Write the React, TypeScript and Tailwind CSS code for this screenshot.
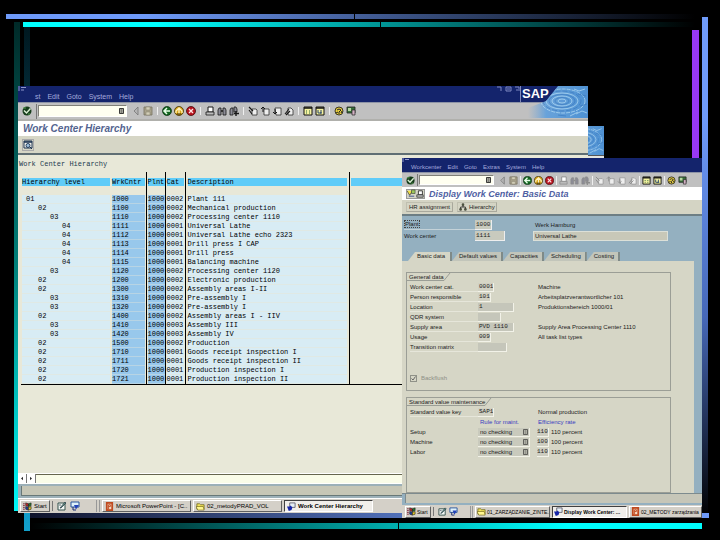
import type { ReactNode } from "react";
import clsx from "clsx";

type GlyphName =
  | "check" | "left" | "save" | "back" | "exit" | "cancel" | "print" | "find" | "findNext"
  | "first" | "prev" | "next" | "last" | "session" | "shortcut" | "help" | "layout"
  | "detail" | "change" | "tree" | "windows" | "desktop" | "refresh" | "ppt" | "folder" | "sap";

const GLYPHS: Record<GlyphName, ReactNode> = {
  check: (
    <>
      <circle cx="5" cy="5" r="4.5" fill="#173d1c" />
      <path d="M2 4.5L4.5 7L8.5 2.5" fill="none" stroke="#d9efd2" strokeWidth="1.5" />
      <path d="M1 2h3M6 8h2" stroke="#57a04f" />
    </>
  ),
  left: <path d="M7 1L3 5l4 4z" fill="#b4b4b4" stroke="#777" strokeWidth=".8" />,
  save: (
    <>
      <path d="M1 1h8v8H1z" fill="#a8a28c" stroke="#77715f" strokeWidth=".8" />
      <path d="M3 1h4v3H3zM3 6h4v3H3z" fill="#d2ceb8" stroke="#827c68" strokeWidth=".5" />
    </>
  ),
  back: (
    <>
      <circle cx="5" cy="5" r="4.5" fill="#12651f" stroke="#0a2b10" strokeWidth=".7" />
      <path d="M5 2L2 5l3 3M2 5h6" fill="none" stroke="#e8ffe8" strokeWidth="1.5" />
    </>
  ),
  exit: (
    <>
      <circle cx="5" cy="5" r="4.5" fill="#d9a514" stroke="#3c2c05" strokeWidth=".8" />
      <path d="M2 7V5l3-3l3 3v2M5 3v5" fill="none" stroke="#fff3bd" strokeWidth="1.3" />
      <path d="M3 8h4" stroke="#2a2108" />
    </>
  ),
  cancel: (
    <>
      <circle cx="5" cy="5" r="4.5" fill="#b8141f" stroke="#44070b" strokeWidth=".8" />
      <path d="M3 3l4 4M7 3L3 7" stroke="#ffe5e5" strokeWidth="1.3" />
    </>
  ),
  print: (
    <>
      <path d="M3 1h5v5H3z" fill="#fff" stroke="currentColor" />
      <path d="M1 6h8v3H1z" fill="#bbb" stroke="currentColor" strokeWidth=".8" />
    </>
  ),
  find: (
    <>
      <path d="M1 4l1-2h2v7H1zM6 2h2l1 2v5H6z" fill="#8c8c96" stroke="currentColor" strokeWidth=".8" />
      <path d="M4 5h2" stroke="currentColor" strokeWidth="1.5" />
    </>
  ),
  findNext: (
    <>
      <path d="M1 4l1-2h2v7H1zM5 1h2l1 2v3H5z" fill="#8c8c96" stroke="currentColor" strokeWidth=".8" />
      <path d="M7 5v5M5 7.5h5" stroke="currentColor" strokeWidth="1.4" />
    </>
  ),
  first: (
    <>
      <path d="M4 3h4l1 1v5H4z" fill="#eee" stroke="currentColor" strokeWidth=".7" />
      <path d="M1 1l4 4M1 4l3 4" stroke="currentColor" strokeWidth="1.1" />
    </>
  ),
  prev: (
    <>
      <path d="M4 3h5v6H4z" fill="#eee" stroke="currentColor" strokeWidth=".7" />
      <path d="M1 3l2-2l2 2M3 1v5" fill="none" stroke="currentColor" />
    </>
  ),
  next: (
    <>
      <path d="M3 2h6v7H4z" fill="#eee" stroke="currentColor" strokeWidth=".7" />
      <path d="M1 6l2 2l2-2M3 3v5" fill="none" stroke="currentColor" />
    </>
  ),
  last: (
    <>
      <path d="M4 2h3l2 2v5H4z" fill="#eee" stroke="currentColor" strokeWidth=".7" />
      <path d="M1 8l4-5M2 9l4-4" stroke="currentColor" strokeWidth="1.1" />
    </>
  ),
  session: (
    <>
      <path d="M1 1h8v8H1z" fill="#f5f2a0" stroke="#111" />
      <path d="M1 2h8" stroke="#111" strokeWidth="1.5" />
      <path d="M3 5h1M6 5h1M3 7h1M6 7h1" stroke="#28633a" />
    </>
  ),
  shortcut: (
    <>
      <path d="M1 1h8v8H1z" fill="#f5f2a0" stroke="#111" />
      <path d="M1 2h8" stroke="#111" strokeWidth="1.5" />
      <path d="M3 4v3h3V4M5 7h2" fill="none" stroke="#28446b" />
    </>
  ),
  help: (
    <>
      <circle cx="5" cy="5" r="4" fill="#e8cf40" stroke="#111" strokeWidth=".8" />
      <path d="M3 4l2-1l2 1l-2 2v2M2 7l2-1M7 7l1-2" fill="none" stroke="#222" />
    </>
  ),
  layout: (
    <>
      <path d="M1 1h8v6H1z" fill="#39703a" stroke="#222" strokeWidth=".8" />
      <path d="M2 2h3v3H2z" fill="#b7d6a1" />
      <path d="M6 4h3v5H6z" fill="#d1b0c2" stroke="#222" strokeWidth=".7" />
    </>
  ),
  detail: (
    <>
      <path d="M1 1h8v7H1z" fill="#f4f4ee" stroke="#19304f" />
      <path d="M1 2h8" stroke="#19304f" strokeWidth="1.5" />
      <circle cx="5" cy="5.5" r="2" fill="#9fc1dd" stroke="#19304f" strokeWidth=".9" />
      <path d="M7 7l2 2" stroke="#19304f" />
    </>
  ),
  change: (
    <>
      <path d="M0 2l3 5l3-5" fill="#f6e34a" stroke="#222" strokeWidth=".7" />
      <path d="M5 1h4v4H5z" fill="#9cc85b" stroke="#333" strokeWidth=".6" />
      <path d="M2 8h6" stroke="#394b8d" />
    </>
  ),
  tree: (
    <>
      <path d="M5 3v2M2 7V5h6v2" fill="none" stroke="#222" />
      <path d="M4 1h2v2H4zM1 7h2v2H1zM7 7h2v2H7z" fill="#6f7f4b" stroke="#222" strokeWidth=".8" />
    </>
  ),
  windows: (
    <>
      <path d="M3 1l3 1v3L3 4z" fill="#c9282b" stroke="#111" strokeWidth=".6" />
      <path d="M6 2l3-1v3L6 5z" fill="#247a30" stroke="#111" strokeWidth=".6" />
      <path d="M3 5l3 1v3L3 8z" fill="#2440a5" stroke="#111" strokeWidth=".6" />
      <path d="M6 6l3-1v3L6 9z" fill="#e4c828" stroke="#111" strokeWidth=".6" />
      <path d="M0 2h2M0 4h2M0 6h2M0 8h2" stroke="#7d2138" />
    </>
  ),
  desktop: (
    <>
      <path d="M1 2h7v7H1z" fill="#f1f6f3" stroke="#33504c" />
      <path d="M3 7l5-6l1 1l-5 5zM2 4h2" fill="#6aa089" stroke="#234" strokeWidth=".7" />
    </>
  ),
  refresh: (
    <>
      <path d="M1 1h8v5H1z" fill="#dff1fa" stroke="#28549a" />
      <path d="M4 4h5L6 8.5z" fill="#2343b8" />
      <path d="M3 6v3h3" fill="none" stroke="#1b2c70" />
    </>
  ),
  ppt: (
    <>
      <path d="M1 0h8v10H1z" fill="#bf4a1f" />
      <path d="M3 2h4v6H3z" fill="#f6d9c2" />
      <path d="M4 8V3h2v2H4" fill="none" stroke="#bf4a1f" />
    </>
  ),
  folder: (
    <>
      <path d="M1 2h3l1 1h4v5H1z" fill="#f2e45a" stroke="#6a6114" strokeWidth=".8" />
      <path d="M0 5h8l1 4H2z" fill="#fff690" stroke="#6a6114" strokeWidth=".7" />
    </>
  ),
  sap: (
    <>
      <path d="M3 1h6v5H3z" fill="#e6eef5" stroke="#445" strokeWidth=".8" />
      <path d="M0 5h3l1-1l2 2l-1 3l-3 1z" fill="#1625a8" />
    </>
  ),
};

function Glyph({ name, className = "size-[10px]" }: { name: GlyphName; className?: string }) {
  return (
    <svg viewBox="0 0 10 10" className={clsx("block shrink-0", className)} aria-hidden="true">
      {GLYPHS[name]}
    </svg>
  );
}

const TOOL_GROUPS: GlyphName[][] = [
  ["left", "save"],
  ["back", "exit", "cancel"],
  ["print", "find", "findNext"],
  ["first", "prev", "next", "last"],
  ["session", "shortcut"],
  ["help", "layout"],
];

function Toolbar({ compact = false }: { compact?: boolean }) {
  const size = compact ? "size-[9px]" : "size-[10px]";
  return (
    <div
      className={clsx(
        "flex shrink-0 items-center border-t border-[#8e94a6] bg-[#c0c0c0] pl-1",
        compact ? "h-[15px]" : "h-[19px] border-b-2 border-b-[#b0b0ac]"
      )}
    >
      <button type="button" aria-label="Enter"><Glyph name="check" className={size} /></button>
      <span className={clsx("w-px bg-[#777]", compact ? "ml-[2px] h-3" : "ml-1 h-[15px]")} />
      <div className={clsx("relative ml-px flex items-center", compact ? "w-[75px]" : "w-[89px]")}>
        <input
          aria-label="Command"
          className={clsx(
            "w-full min-w-0 border border-t-[#808078] border-l-[#808078] border-r-white border-b-white bg-[#fffff0]",
            compact ? "h-[10px]" : "h-3"
          )}
        />
        <svg viewBox="0 0 5 6" className="absolute right-[3px] h-[6px] w-[5px]" aria-hidden="true">
          <path d="M.5.5h4v5h-4zM1.5 2h2M1.5 4h2" fill="#c8c8bc" stroke="#111" strokeWidth=".8" />
        </svg>
      </div>
      <div className="ml-1 flex items-center gap-[2px]">
        {TOOL_GROUPS.map((group, i) => (
          <div key={i} className="flex items-center gap-[2px]">
            {i > 0 && <span className={clsx("w-px bg-[#eee]", compact ? "h-[9px]" : "mx-[2px] h-2")} />}
            {group.map((name) => (
              <button
                key={name}
                type="button"
                aria-label={name}
                className={compact ? "text-[#8c8c8c]" : "text-[#181818]"}
              >
                <Glyph name={name} className={size} />
              </button>
            ))}
          </div>
        ))}
      </div>
    </div>
  );
}

function Water({ className }: { className: string }) {
  return (
    <svg viewBox="0 0 60 32" preserveAspectRatio="none" className={className} aria-hidden="true">
      <defs>
        <linearGradient id="water" x1="0" x2="1" y1="0" y2="0">
          <stop offset="0" stopColor="#7fa9d4" stopOpacity="0" />
          <stop offset=".3" stopColor="#6aa3da" />
          <stop offset="1" stopColor="#4f92d3" />
        </linearGradient>
        <clipPath id="shore">
          <path d="M30 0H60V32H0V22L18 15z" />
        </clipPath>
      </defs>
      <g clipPath="url(#shore)">
        <path d="M0 0H60V32H0z" fill="url(#water)" />
        <g fill="none" stroke="#b4dcf5" strokeWidth=".9" opacity=".8">
          <ellipse cx="34" cy="15" rx="4" ry="2" />
          <ellipse cx="34" cy="15" rx="10" ry="5" />
          <ellipse cx="34" cy="15" rx="16" ry="8" />
          <ellipse cx="35" cy="15" rx="22" ry="12" strokeDasharray="4 1" />
          <path d="M46 3l5 2l6-2M48 28l6-3l5 2M42 30l8-4" />
        </g>
        <g fill="none" stroke="#2f6fb6" strokeWidth=".7" opacity=".7">
          <ellipse cx="34" cy="15" rx="7" ry="3.5" />
          <ellipse cx="34" cy="15" rx="13" ry="6.5" />
          <ellipse cx="34" cy="15" rx="19" ry="10" strokeDasharray="5 2" />
          <path d="M50 8l8 2M52 20l7-2M30 29l8 1" />
        </g>
      </g>
    </svg>
  );
}

type Row = [level: number, wrkCntr: string, cat: string, description: string];

const ROWS: Row[] = [
  [1, "1000", "0002", "Plant 111"],
  [2, "1100", "0002", "Mechanical production"],
  [3, "1110", "0002", "Processing center 1110"],
  [4, "1111", "0001", "Universal Lathe"],
  [4, "1112", "0001", "Universal Lathe echo 2323"],
  [4, "1113", "0001", "Drill press I CAP"],
  [4, "1114", "0001", "Drill press"],
  [4, "1115", "0001", "Balancing machine"],
  [3, "1120", "0002", "Processing center 1120"],
  [2, "1200", "0002", "Electronic production"],
  [2, "1300", "0002", "Assembly areas I-II"],
  [3, "1310", "0002", "Pre-assembly I"],
  [3, "1320", "0002", "Pre-assembly I"],
  [2, "1400", "0002", "Assembly areas I - IIV"],
  [3, "1410", "0003", "Assembly III"],
  [3, "1420", "0003", "Assembly IV"],
  [2, "1500", "0002", "Production"],
  [2, "1710", "0001", "Goods receipt inspection I"],
  [2, "1711", "0001", "Goods receipt inspection II"],
  [2, "1720", "0001", "Production inspection I"],
  [2, "1721", "0001", "Production inspection II"],
];

const INDENT = ["", "pl-1", "pl-4", "pl-7", "pl-10"];

function HierarchyTable() {
  const line = "border-r border-black p-0";
  const head = "mb-[9px] mt-[6px] h-2 bg-[#60ccf8] leading-[8px]";
  const pale = "h-[9px] border-b border-[#e0e9e4] bg-[#d8ecf4] leading-[8px]";
  const blue = "h-[9px] border-b border-[#b8d4e4] bg-[#98c8ec] leading-[8px]";
  return (
    <table className="mt-[3px] w-full table-fixed border-collapse border-b border-black text-left text-black">
      <colgroup>
        <col className="w-[90px]" />
        <col className="w-[35px]" />
        <col className="w-[19px]" />
        <col className="w-5" />
        <col className="w-[164px]" />
        <col />
      </colgroup>
      <thead>
        <tr className="whitespace-nowrap">
          <th className="p-0 font-normal"><div className={clsx(head, "mx-px")}>Hierarchy level</div></th>
          <th className={clsx(line, "font-normal")}><div className={clsx(head, "mx-px")}>WrkCntr</div></th>
          <th className={clsx(line, "font-normal")}><div className={clsx(head, "ml-px")}>Plnt</div></th>
          <th className={clsx(line, "font-normal")}><div className={clsx(head, "mx-px")}>Cat</div></th>
          <th className={clsx(line, "font-normal")}><div className={clsx(head, "mx-[2px]")}>Description</div></th>
          <th className="p-0"><div className={clsx(head, "ml-px")} /></th>
        </tr>
      </thead>
      <tbody>
        {ROWS.map(([level, wrkCntr, cat, description]) => (
          <tr key={wrkCntr} className="whitespace-nowrap">
            <td className="p-0"><div className={clsx(pale, "mx-px", INDENT[level])}>0{level}</div></td>
            <td className={line}><div className={clsx(blue, "mx-px")}>{wrkCntr}</div></td>
            <td className={line}><div className={clsx(blue, "ml-px")}>1000</div></td>
            <td className={line}><div className={clsx(pale, "mx-px")}>{cat}</div></td>
            <td className={line}><div className={clsx(pale, "mx-[2px]")}>{description}</div></td>
            <td className="p-0" />
          </tr>
        ))}
      </tbody>
    </table>
  );
}

function TaskButton({ icon, active, small, className, children }: {
  icon: GlyphName;
  active?: boolean;
  small?: boolean;
  className?: string;
  children: ReactNode;
}) {
  return (
    <button
      type="button"
      className={clsx(
        "flex h-3 items-center overflow-hidden border leading-[8px] whitespace-nowrap text-black",
        small ? "gap-px pl-px text-[5px]" : "gap-[2px] pl-[2px] text-[6px]",
        active
          ? "border-t-[#404040] border-l-[#404040] border-r-white border-b-white bg-[#f0eeea] font-bold"
          : "border-t-white border-l-white border-r-[#606060] border-b-[#606060] bg-[#d4d0c8]",
        className
      )}
    >
      <Glyph name={icon} className="size-[9px]" />
      {children}
    </button>
  );
}

function Menu({ items, className }: { items: string[]; className: string }) {
  return (
    <nav className={clsx("flex items-center text-[#a3a9dc]", className)}>
      {items.map((item) => (
        <button key={item} type="button">{item}</button>
      ))}
    </nav>
  );
}

function HierarchyWindow() {
  return (
    <section className="absolute top-[86px] right-[132px] bottom-[27px] left-[18px] flex flex-col overflow-hidden bg-[#e8e8d8]">
      <div className="flex h-4 shrink-0 items-start bg-[#14246c]">
        <svg viewBox="0 0 8 7" className="h-[7px] w-2" aria-hidden="true">
          <path d="M1 0v5M3 1.5h5M3 4h3" fill="none" stroke="#8e96cc" />
        </svg>
        <Menu items={["st", "Edit", "Goto", "System", "Help"]} className="h-4 gap-[7px] pt-[6px] pl-[9px] text-[7px] leading-[8px]" />
      </div>
      <div className="absolute top-0 right-0 flex h-8 w-[92px] items-start">
        <svg viewBox="0 0 24 7" className="h-[7px] w-6 shrink-0" aria-hidden="true">
          <path d="M1 1h4v4M10 1h5v4h-5zM11 3h3M19 1h4v4M20 4h2" fill="none" stroke="#7f88c0" />
        </svg>
        <span className="h-4 w-px shrink-0 bg-[#8088b8]" />
        <Water className="absolute right-0 h-8 w-[60px]" />
        <span className="relative pl-px text-[13px] leading-[16px] font-bold text-white">SAP</span>
      </div>
      <Toolbar />
      <h1 className="h-[15px] shrink-0 bg-white pl-[5px] text-[10px] leading-[15px] font-bold text-[#53648f] italic">
        Work Center Hierarchy
      </h1>
      <div className="flex h-[19px] shrink-0 items-center border-b-2 border-[#5f6e74] bg-[#d6d6c6] pl-1">
        <button type="button" aria-label="Details" className="flex size-3 items-center justify-center border border-[#aaa]">
          <Glyph name="detail" />
        </button>
      </div>
      <div className="flex-1 pt-[5px] pl-[3px] font-['Liberation_Mono',monospace] text-[7px]">
        <h2 className="-ml-[2px] leading-[9px] text-[#1e3c50]">Work Center Hierarchy</h2>
        <HierarchyTable />
      </div>
      <div className="flex h-[11px] shrink-0 items-stretch gap-px border-t border-b border-white bg-[#777]">
        <button type="button" aria-label="Scroll left" className="flex w-2 items-center justify-center bg-white">
          <svg viewBox="0 0 4 6" className="h-[5px] w-1"><path d="M3 1L1 3l2 2z" /></svg>
        </button>
        <button type="button" aria-label="Scroll right" className="flex w-2 items-center justify-center bg-white">
          <svg viewBox="0 0 4 6" className="h-[5px] w-1"><path d="M1 1l2 2l-2 2z" /></svg>
        </button>
        <span className="flex-1 border-t border-[#66664e] bg-[#fafce8]" />
      </div>
      <div className="h-[14px] shrink-0 border-y-2 border-[#9cb0b8] bg-[#9cb0b8] pl-[3px]">
        <div className="h-[10px] border-b border-l border-[#687878] bg-[#c6c6b6]" />
      </div>
      <div className="flex h-[15px] shrink-0 items-center gap-[2px] border-t border-white bg-[#d4d0c8] pl-[2px]">
        <TaskButton icon="windows" className="w-[30px]">Start</TaskButton>
        <div className="mr-[14px] flex gap-[3px] border-l border-[#777] pl-1">
          <Glyph name="desktop" />
          <Glyph name="refresh" />
        </div>
        <span className="h-3 w-1 border-x border-[#999]" />
        <TaskButton icon="ppt" className="w-[89px]">Microsoft PowerPoint - [C..</TaskButton>
        <TaskButton icon="folder" className="w-[89px]">02_metodyPRAD_VOL</TaskButton>
        <TaskButton icon="sap" active className="w-[89px]">Work Center Hierarchy</TaskButton>
      </div>
    </section>
  );
}

const MONO = "font-['Liberation_Mono',monospace]";

type Field = {
  id: string;
  label: string;
  value: string;
  width: string;
  filled?: boolean;
  note?: string;
};

const GENERAL: Field[] = [
  { id: "cat", label: "Work center cat.", value: "0001", width: "w-4", note: "Machine" },
  { id: "person", label: "Person responsible", value: "101", width: "w-[13px]", note: "Arbeitsplatzverantwortlicher 101" },
  { id: "location", label: "Location", value: "1", width: "w-9", filled: true, note: "Produktionsbereich 1000/01" },
  { id: "qdr", label: "QDR system", value: "", width: "w-[23px]", filled: true },
  { id: "supply", label: "Supply area", value: "PVD 1110", width: "w-9", filled: true, note: "Supply Area Processing Center 1110" },
  { id: "usage", label: "Usage", value: "009", width: "w-[13px]", note: "All task list types" },
  { id: "matrix", label: "Transition matrix", value: "", width: "w-[29px]", filled: true },
];

function FieldRow({ id, label, value, width, filled, note }: Field) {
  return (
    <div className="flex h-[10px] items-center">
      <label htmlFor={id} className="h-[10px] w-[68px] border-b border-[#e6e6da] leading-[10px]">{label}</label>
      <div className="flex w-[60px]">
        <input
          id={id}
          readOnly
          defaultValue={value}
          className={clsx(
            "h-[9px] min-w-0 border-r border-b border-[#f2f2e8] pl-px text-[6px]",
            MONO,
            width,
            filled ? "bg-[#c5c6ba]" : "bg-[#d0d0c2]"
          )}
        />
      </div>
      <span>{note}</span>
    </div>
  );
}

const CHECKS = [
  { label: "Setup", rate: "110" },
  { label: "Machine", rate: "100" },
  { label: "Labor", rate: "110" },
];

function Group({ title, className, children }: { title: string; className?: string; children: ReactNode }) {
  return (
    <section className={clsx("mr-[23px] border border-[#9b9e96]", className)}>
      <div className="flex h-2">
        <h3 className="border-b border-[#9b9e96] pl-[2px] leading-[8px]">{title}</h3>
        <svg viewBox="0 0 7 8" className="h-2 w-[7px]" aria-hidden="true">
          <path d="M0 7.5L6 0" stroke="#9b9e96" />
        </svg>
      </div>
      <div className="pt-px pl-[3px]">{children}</div>
    </section>
  );
}

function DataWindow() {
  return (
    <section className="absolute top-[158px] right-[18px] bottom-[22px] left-[402px] flex flex-col overflow-hidden bg-[#94b0c0] text-[6px] leading-[8px] text-[#1c1c1c]">
      <div className="flex h-[14px] shrink-0 items-start bg-[#14246c]">
        <svg viewBox="0 0 8 7" className="h-[7px] w-2" aria-hidden="true">
          <path d="M1 0v4M3 1.5h4" fill="none" stroke="#8e96cc" />
        </svg>
        <Menu items={["Workcenter", "Edit", "Goto", "Extras", "System", "Help"]} className="h-[14px] gap-[6px] pt-1 pl-px" />
      </div>
      <Toolbar compact />
      <div className="flex h-[13px] shrink-0 items-center gap-1 bg-white pl-1">
        <button type="button" aria-label="Display or change" className="flex h-[10px] w-[19px] items-center border border-[#999] bg-[#d6d6c6]">
          <Glyph name="change" className="size-[9px]" />
          <Glyph name="print" className="size-2" />
        </button>
        <h1 className="text-[9px] leading-[12px] font-bold text-[#4f5fa3] italic">Display Work Center: Basic Data</h1>
      </div>
      <div className="flex h-4 shrink-0 items-center gap-1 border-b-2 border-[#6d7e84] bg-[#d4d4c4] pl-1">
        <button type="button" className="h-[10px] border border-[#c0c0b0] border-r-[#a8a89c] border-b-[#a8a89c] px-[2px]">HR assignment</button>
        <button type="button" className="flex h-[10px] items-center gap-[2px] border border-[#c0c0b0] border-r-[#a8a89c] border-b-[#a8a89c] px-px">
          <Glyph name="tree" className="size-2" />
          Hierarchy
        </button>
      </div>

      <div className="flex h-9 shrink-0 flex-col gap-px pt-1 pl-[2px]">
        <div className="flex h-[10px] items-center">
          <label htmlFor="plant" className="w-[71px] border-b border-[#c4d2d8] leading-[9px]">
            <span className="border border-dotted border-[#444]">Plant</span>
          </label>
          <div className="w-[60px]">
            <input id="plant" readOnly defaultValue="1000" className={clsx("block h-[10px] w-[17px] border-r border-b border-[#eee] bg-[#c8cabe] pl-px text-[6px]", MONO)} />
          </div>
          <span>Werk Hamburg</span>
        </div>
        <div className="flex h-[10px] items-center">
          <label htmlFor="wc" className="w-[71px]">Work center</label>
          <div className="w-[58px]">
            <input id="wc" readOnly defaultValue="1111" className={clsx("block h-[10px] w-[30px] border-r border-b border-[#eee] bg-[#c8cabe] pl-px text-[6px]", MONO)} />
          </div>
          <input aria-label="Work center name" readOnly defaultValue="Universal Lathe" className="h-[10px] w-[135px] min-w-0 border border-[#dce0d8] bg-[#c8c8b8] pl-px text-[6px]" />
        </div>
      </div>

      <div role="tablist" className="flex h-[9px] shrink-0 pl-[6px]">
        {["Basic data", "Default values", "Capacities", "Scheduling", "Costing"].map((tab, i) => (
          <button
            key={tab}
            type="button"
            role="tab"
            aria-selected={i === 0}
            className={clsx(
              "border-r-2 border-[#7f8a88] leading-[9px] [clip-path:polygon(7px_0,100%_0,100%_100%,0_100%)]",
              i === 0 ? "bg-[#d6d6c6] pr-[5px] pl-[9px]" : "bg-[#c2c5ba] pr-1 pl-[7px]"
            )}
          >
            {tab}
          </button>
        ))}
      </div>

      <div className="mr-2 flex flex-1 flex-col bg-[#d6d6c6] pt-[11px] pl-1">
        <Group title="General data" className="h-[119px]">
          {GENERAL.map((field) => <FieldRow key={field.id} {...field} />)}
          <label className="mt-[22px] flex items-center gap-1 text-[#8d8f86]">
            <span className="relative flex size-[7px]">
              <input type="checkbox" defaultChecked disabled className="size-[7px] appearance-none border border-[#8f9188] bg-[#d6d6c6]" />
              <svg viewBox="0 0 7 7" className="absolute inset-0 size-[7px]" aria-hidden="true">
                <path d="M1.5 3.5L3 5l2.5-3.5" fill="none" stroke="#666" />
              </svg>
            </span>
            Backflush
          </label>
        </Group>
        <Group title="Standard value maintenance" className="mt-[6px] flex-1">
          <FieldRow id="key" label="Standard value key" value="SAP1" width="w-4" note="Normal production" />
          <div className="flex h-[10px] items-center pl-[70px] text-[#3a3cc0]">
            <span className="w-[58px]">Rule for maint.</span>
            <span>Efficiency rate</span>
          </div>
          {CHECKS.map(({ label, rate }) => (
            <div key={label} className="flex h-[10px] items-center">
              <label htmlFor={label} className="w-[68px]">{label}</label>
              <div className="relative flex w-[59px] items-center">
                <select id={label} className="h-[9px] w-[52px] appearance-none border-r border-b border-[#f2f2e8] bg-[#c9cabd] pl-[2px] text-[6px] leading-[8px]">
                  <option>no checking</option>
                </select>
                <svg viewBox="0 0 5 6" className="pointer-events-none absolute right-[9px] h-[6px] w-[5px]" aria-hidden="true">
                  <path d="M.5.5h4v5h-4zM1.5 2h2M1.5 4h2" fill="none" stroke="#333" strokeWidth=".7" />
                </svg>
              </div>
              <input aria-label={`${label} rate`} readOnly defaultValue={rate} className={clsx("h-[9px] w-3 min-w-0 border-r border-b border-[#f2f2e8] bg-[#cdcdc0] text-[6px]", MONO)} />
              <span className="pl-[2px]">{rate} percent</span>
            </div>
          ))}
        </Group>
      </div>

      <div className="h-3 shrink-0 border-t border-[#7d8b8e] pb-[2px] pl-[3px]">
        <div className="h-[9px] border-l border-[#7d8b8e] bg-[#c6c6b8]" />
      </div>
      <div className="flex h-[13px] shrink-0 items-center gap-[2px] bg-[#d4d0c8] pl-[3px]">
        <TaskButton icon="windows" small className="w-[26px]">Start</TaskButton>
        <div className="mr-[10px] flex gap-[2px] border-l border-[#777] pl-1">
          <Glyph name="desktop" className="size-[9px]" />
          <Glyph name="refresh" className="size-[9px]" />
        </div>
        <span className="h-3 w-[3px] border-x border-[#999]" />
        <TaskButton icon="folder" small className="w-[75px]">01_ZARZĄDZANIE_ZINTE...</TaskButton>
        <TaskButton icon="sap" small active className="w-[75px]">Display Work Center: ...</TaskButton>
        <TaskButton icon="ppt" small className="min-w-0 flex-1">02_METODY zarządzania</TaskButton>
      </div>
    </section>
  );
}

function SlideFrame() {
  return (
    <div aria-hidden="true">
      <div className="absolute top-[22px] bottom-[29px] left-[14px] w-[6px] bg-linear-to-b/srgb from-[#002a28] via-[#00807a] to-[#00f8f8]" />
      <div className="absolute top-[27px] bottom-[9px] left-6 w-[6px] bg-linear-to-b/srgb from-[#001820] to-[#12a0cc]" />
      <div className="absolute top-[14px] right-[25px] left-[6px] h-[5px] bg-linear-to-r/srgb from-[#6f9bfa] from-20% to-black" />
      <div className="absolute top-[14px] left-[354px] h-[5px] w-px bg-black" />
      <div className="absolute top-[22px] right-[25px] left-[23px] h-[5px] bg-linear-to-r/srgb from-[#00ffff] from-20% to-black" />
      <div className="absolute top-[22px] left-[380px] h-[5px] w-px bg-black" />
      <div className="absolute top-[30px] right-[21px] bottom-[30px] w-[7px] bg-linear-to-b/srgb from-[#9838f4] from-30% to-black" />
      <div className="absolute top-[17px] right-3 bottom-[22px] w-[6px] bg-linear-to-b/srgb from-[#6f9bfa] from-20% via-[#4668b8] via-60% to-black" />
      <div className="absolute right-[11px] bottom-[22px] left-[30px] h-[5px] bg-linear-to-r/srgb from-[#10142c] to-[#6f9bfa] to-80%" />
      <div className="absolute right-[18px] bottom-[11px] left-[30px] h-[6px] bg-linear-to-r/srgb from-black to-[#00ffff] to-80%" />
      <div className="absolute bottom-[11px] left-[398px] h-[6px] w-px bg-black" />
    </div>
  );
}

export default function App() {
  return (
    <main className="relative h-screen overflow-hidden bg-black font-['Liberation_Sans',Arial,sans-serif]">
      <SlideFrame />
      <div className="absolute top-[126px] right-[116px] flex h-8 w-12 flex-col bg-[#4f8cc8]">
        <Water className="h-[29px] w-full" />
        <span className="h-[3px] border-t border-[#555] bg-[#e4e4e0]" />
      </div>
      <HierarchyWindow />
      <DataWindow />
    </main>
  );
}
